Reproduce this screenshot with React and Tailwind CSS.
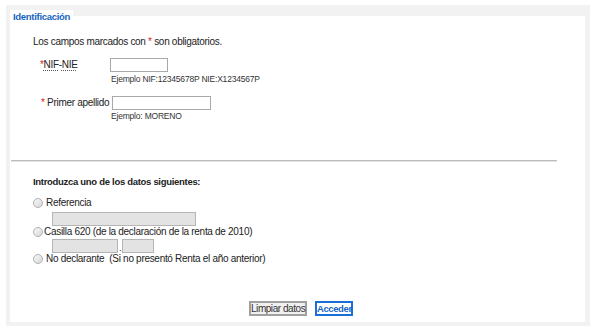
import React from 'react';

function Radio() {
  return (
    <span className="inline-block w-[10px] h-[10px] rounded-full border border-[#b0b0b0] bg-gradient-to-br from-[#f8f8f8] to-[#d8d8d8] shrink-0" />
  );
}

export default function App() {
  return (
    <div className="w-[600px] h-[329px] bg-white pt-[5px] pl-[6px] font-['Liberation_Sans',Arial,sans-serif] text-[#222]">
      <div className="w-[584px] h-[321px] bg-[#f2f2f2] pt-[11px] pl-[4px] pr-[5px] pb-[4px]">
        <div className="relative bg-white h-full text-[10px] leading-[12px] tracking-[-0.3px]">
          {/* legend */}
          <div className="absolute -top-[6px] left-0 bg-white pl-[3px] pr-[3px] pt-[1px] text-[9.5px] leading-[12px] font-bold text-[#1565c0]">
            Identificación
          </div>

          <div className="pt-[20px] pl-[23px]">
            Los campos marcados con <span className="text-[#e0201a]">*</span> son obligatorios.
          </div>

          {/* NIF-NIE */}
          <div className="flex mt-[10px]">
            <div className="w-[100px] shrink-0 pl-[30px] pt-[1px]">
              <span className="text-[#e0201a]">*</span>
              <span className="underline decoration-dotted decoration-[#555] underline-offset-2">NIF</span>-
              <span className="underline decoration-dotted decoration-[#555] underline-offset-2">NIE</span>
            </div>
            <div className="flex flex-col">
              <div className="w-[58px] h-[14px] border border-[#a9a9a9] bg-white" />
              <div className="mt-[2px] pl-[1px] text-[8.5px] leading-[10px] tracking-[-0.2px] text-[#333]">Ejemplo NIF:12345678P NIE:X1234567P</div>
            </div>
          </div>

          {/* Primer apellido */}
          <div className="flex mt-[12px]">
            <div className="w-[102px] shrink-0 pl-[31px] pt-[1px] whitespace-nowrap">
              <span className="text-[#e0201a]">*</span> Primer apellido
            </div>
            <div className="flex flex-col">
              <div className="w-[99px] h-[14px] border border-[#a9a9a9] bg-white" />
              <div className="mt-[1px] -ml-[1px] text-[8.5px] leading-[10px] tracking-[-0.2px] text-[#333]">Ejemplo: MORENO</div>
            </div>
          </div>

          {/* divider */}
          <div className="mt-[39px] ml-[1px] w-[546px] h-[2px] bg-[#bdbdbd] border-b border-[#e2e2e2]" />

          <div className="mt-[14px] pl-[23px] text-[9.5px] font-bold text-[#222]">
            Introduzca uno de los datos siguientes:
          </div>

          <div className="mt-[9px] pl-[23px] flex items-center gap-[3px]">
            <Radio />
            <span>Referencia</span>
          </div>
          <div className="mt-[3px] ml-[42px] w-[144px] h-[14px] border border-[#b5b5b5] bg-[#e3e3e3]" />

          <div className="pl-[23px] flex items-center gap-[1px] leading-[11px]">
            <Radio />
            <span>Casilla 620 (de la declaración de la renta de 2010)</span>
          </div>
          <div className="mt-[2px] ml-[42px] flex items-end">
            <div className="w-[66px] h-[14px] border border-[#b5b5b5] bg-[#e3e3e3]" />
            <span className="text-[9px] leading-[10px] px-[1px]">.</span>
            <div className="w-[32px] h-[14px] border border-[#b5b5b5] bg-[#e3e3e3]" />
          </div>

          <div className="pl-[23px] flex items-center gap-[3px]">
            <Radio />
            <span className="whitespace-pre">No declarante  (Si no presentó Renta el año anterior)</span>
          </div>

          {/* buttons */}
          <div className="mt-[36px] flex gap-[8px] pl-[239px]">
            <button className="w-[58px] h-[15px] px-0 border-2 border-[#a0a0a0] bg-[#f0f0f0] text-[10px] leading-[10px] tracking-[-0.45px] text-[#333] whitespace-nowrap">
              Limpiar datos
            </button>
            <button className="w-[38px] h-[15px] px-0 border-2 border-[#1a6fd6] bg-white text-[9.5px] leading-[10px] tracking-[-0.4px] font-bold text-[#1565c0] whitespace-nowrap">
              Acceder
            </button>
          </div>
        </div>
      </div>
    </div>
  );
}
